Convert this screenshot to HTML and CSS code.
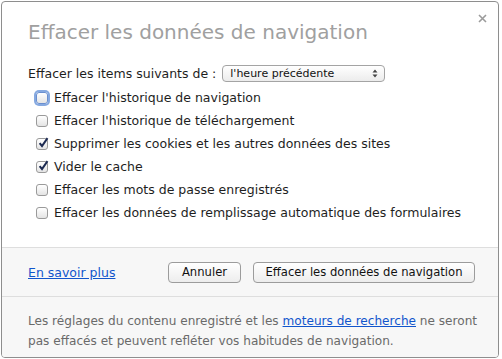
FILE: index.html
```html
<!DOCTYPE html>
<html lang="fr">
<head>
<meta charset="utf-8">
<title>Effacer les données de navigation</title>
<link rel="stylesheet" href="styles.css">
</head>
<body>
<div class="dialog">
  <svg class="close" width="9" height="9" viewBox="0 0 9 9"><path d="M1 1L8 8M8 1L1 8" stroke="#9b9b9b" stroke-width="1.6"/></svg>
  <div class="main">
    <h1 class="title">Effacer les données de navigation</h1>
    <div class="period">
      <span>Effacer les items suivants de :</span>
      <div class="select">
        <span>l'heure précédente</span>
        <svg class="arrows" width="6" height="9" viewBox="0 0 6 9"><path d="M0.5 3.5L3 0.5L5.5 3.5Z M0.5 5.5L3 8.5L5.5 5.5Z" fill="#444"/></svg>
      </div>
    </div>
    <ul class="options">
      <li><span class="cb focus"></span>Effacer l'historique de navigation</li>
      <li><span class="cb"></span>Effacer l'historique de téléchargement</li>
      <li><span class="cb"><svg viewBox="0 0 12 12" width="12" height="12"><path d="M2.6 6.2L5 9L10.5 1.2" fill="none" stroke="#1d2b52" stroke-width="2"/></svg></span>Supprimer les cookies et les autres données des sites</li>
      <li><span class="cb"><svg viewBox="0 0 12 12" width="12" height="12"><path d="M2.6 6.2L5 9L10.5 1.2" fill="none" stroke="#1d2b52" stroke-width="2"/></svg></span>Vider le cache</li>
      <li><span class="cb"></span>Effacer les mots de passe enregistrés</li>
      <li><span class="cb"></span>Effacer les données de remplissage automatique des formulaires</li>
    </ul>
  </div>
  <div class="actions">
    <a class="link" href="#">En savoir plus</a>
    <div class="buttons">
      <button class="btn cancel">Annuler</button>
      <button class="btn primary">Effacer les données de navigation</button>
    </div>
  </div>
  <div class="note">
    Les réglages du contenu enregistré et les <a class="link" href="#">moteurs de recherche</a> ne seront pas effacés et peuvent refléter vos habitudes de navigation.
  </div>
</div>
</body>
</html>
```

FILE: styles.css
```css
html, body {
  margin: 0;
  padding: 0;
  background: #ffffff;
}

.dialog {
  position: relative;
  box-sizing: border-box;
  margin: 1px 0 0 1px;
  width: 498px;
  height: 357px;
  border: 1px solid #8e8e8e;
  border-radius: 4px;
  background: #ffffff;
  display: flex;
  flex-direction: column;
  font-family: "DejaVu Sans", sans-serif;
  font-size: 12.5px;
  color: #1e1e1e;
  overflow: hidden;
}

.close {
  position: absolute;
  top: 12px;
  right: 11px;
}

.main {
  height: 245px;
  box-sizing: border-box;
  padding: 17px 26px 0 26px;
}

.title {
  margin: 0;
  font-weight: normal;
  font-size: 20px;
  line-height: 26px;
  color: #a0a0a0;
}

.period {
  margin-top: 19px;
  display: flex;
  align-items: center;
  height: 18px;
}

.select {
  margin-left: 6px;
  width: 163px;
  height: 17px;
  box-sizing: border-box;
  border: 1px solid #a4a4a4;
  border-radius: 4px;
  background: linear-gradient(#ffffff, #ececec);
  display: flex;
  align-items: center;
  justify-content: space-between;
  padding: 0 6px 0 7px;
  font-size: 11px;
  color: #111;
}

.options {
  list-style: none;
  margin: 4px 0 0 0;
  padding: 0 0 0 8px;
}

.options li {
  height: 23px;
  display: flex;
  align-items: center;
}

.cb {
  width: 12px;
  height: 12px;
  box-sizing: border-box;
  border: 1px solid #9a9a9a;
  border-radius: 3px;
  background: linear-gradient(#ffffff, #e4e4e4);
  margin-right: 6px;
  flex: none;
  position: relative;
}

.cb svg {
  position: absolute;
  left: 0;
  top: -2px;
}

.cb.focus {
  box-shadow: 0 0 0 2px #86a9e0;
  border-color: #6a8fcf;
}

.actions {
  height: 50px;
  box-sizing: border-box;
  border-top: 1px solid #dedede;
  border-bottom: 1px solid #dedede;
  background: #f7f7f7;
  display: flex;
  align-items: center;
  justify-content: space-between;
  padding: 0 23px 0 26px;
}

.link {
  color: #1155cc;
  text-decoration: underline;
}

.buttons {
  display: flex;
  gap: 12px;
}

.btn {
  height: 21px;
  box-sizing: border-box;
  border: 1px solid #9c9c9c;
  border-radius: 4px;
  background: linear-gradient(#ffffff, #ededed);
  font-family: "DejaVu Sans", sans-serif;
  font-size: 11.6px;
  color: #111;
  padding: 0;
}

.cancel { width: 73px; }
.primary { width: 222px; }

.note {
  flex: 1;
  background: #f7f7f7;
  padding: 14px 8px 0 26px;
  line-height: 20px;
  font-size: 12.1px;
  color: #6a6a6a;
}
```
